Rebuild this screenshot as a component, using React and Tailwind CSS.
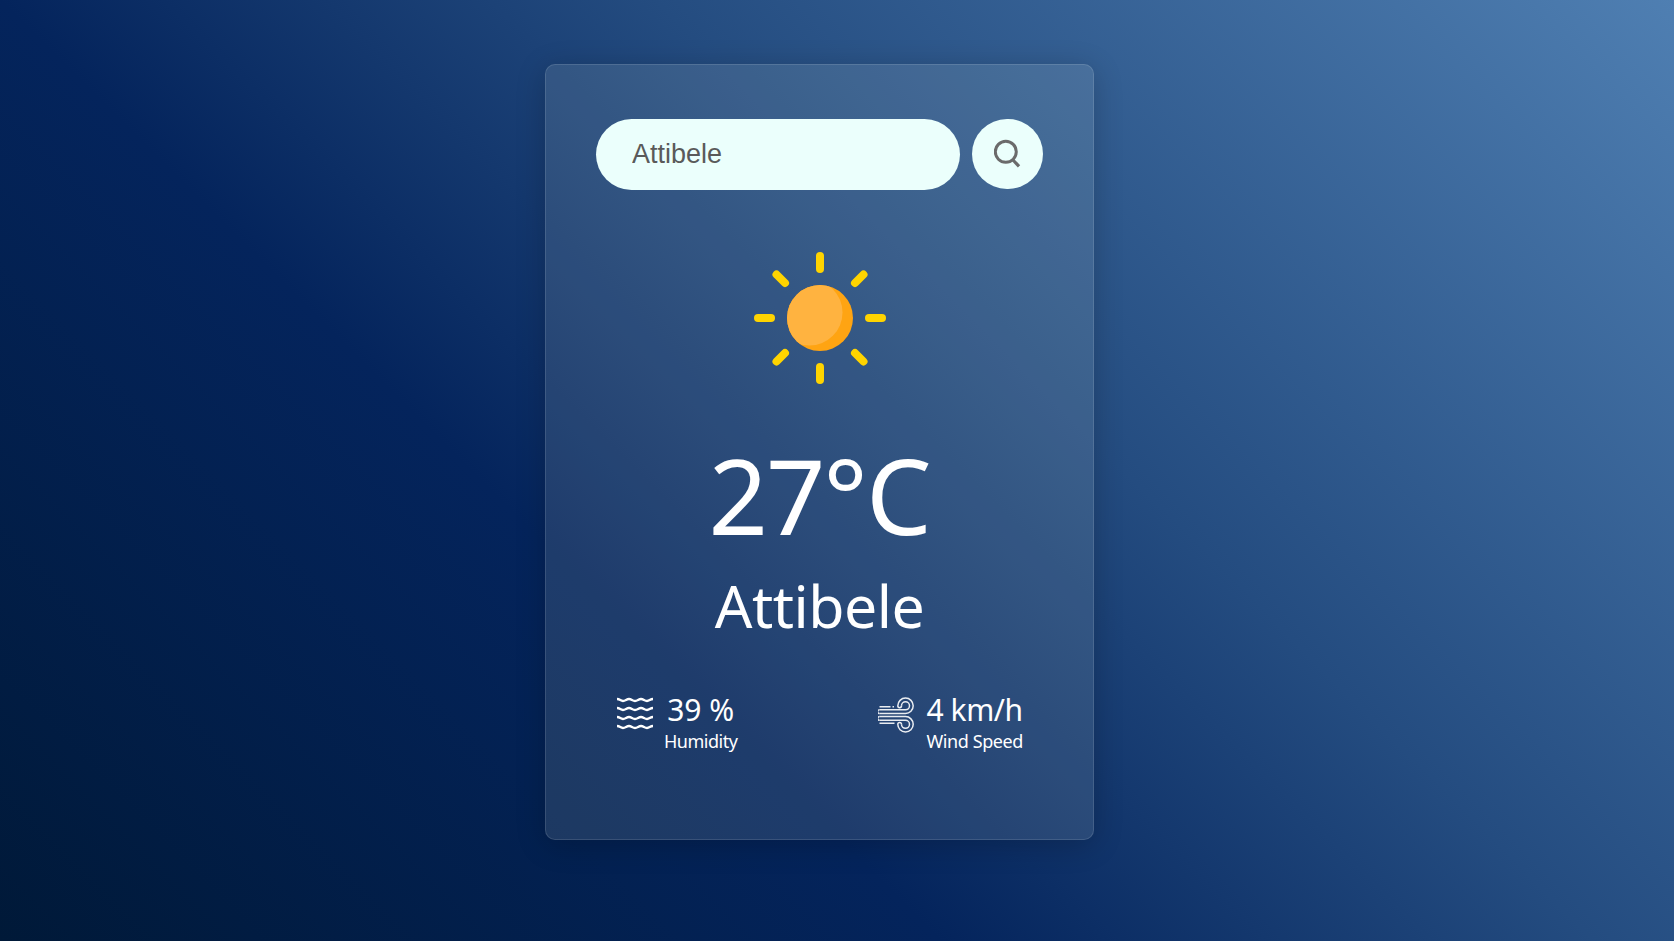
const rays = [0, 45, 90, 135, 180, 225, 270, 315];

function SunIcon() {
  return (
    <svg viewBox="0 0 132 132" className="size-[132px]">
      <defs>
        <clipPath id="disc"><circle cx="66" cy="66" r="33" /></clipPath>
      </defs>
      <circle cx="66" cy="66" r="33" fill="#ffa412" />
      <circle cx="55.500" cy="60.500" r="33" fill="#ffb340" clipPath="url(#disc)" />
      {rays.map((a) => (
        <path key={a} d={a % 90 ? "M66 4.500V16.500" : "M66 4V17"} transform={`rotate(${a} 66 66)`} stroke="#ffd400" strokeWidth="8" strokeLinecap="round" />
      ))}
    </svg>
  );
}

function SearchIcon() {
  return (
    <svg viewBox="0 0 28 30" className="h-[30px] w-7" fill="none" stroke="#6b6b6b" strokeWidth="3">
      <circle cx="11.800" cy="12.800" r="10.500" />
      <path d="M18.500 20.500L25 27.300" strokeWidth="3.200" />
    </svg>
  );
}

function HumidityIcon() {
  return (
    <svg viewBox="0 0 36 34" className="h-[34px] w-9" fill="none" stroke="#fff" strokeWidth="2.300">
      {[2.5, 11.5, 20.5, 29.5].map((y) => (
        <path key={y} d={`M0 ${y - 0.5}C3 ${y - 0.5} 3.500 ${y + 1.5} 6 ${y + 1.5}S9.500 ${y - 0.5} 12 ${y - 0.5}S15.500 ${y + 1.5} 18 ${y + 1.5}S21.500 ${y - 0.5} 24 ${y - 0.5}S27.500 ${y + 1.5} 30 ${y + 1.5}S33 ${y - 0.5} 36 ${y - 0.5}`} />
      ))}
    </svg>
  );
}

function WindIcon() {
  return (
    <svg viewBox="0 0 36 36" className="size-9" fill="none" stroke="#fff" strokeOpacity="0.9" strokeWidth="1.500">
      <path d="M1.500 12.800H27.500A4 4 0 1 0 23.500 8.800" />
      <path d="M1.500 16.500H27.500A7.700 7.700 0 1 0 19.800 8.800A1.850 1.850 0 0 0 23.500 8.800" />
      <path d="M1.500 12.800A1.850 1.850 0 0 0 1.500 16.500" />
      <path d="M1.500 23.300H27.500A4 4 0 1 1 23.500 27.300" />
      <path d="M1.500 19.600H27.500A7.700 7.700 0 1 1 19.800 27.300A1.850 1.850 0 0 1 23.500 27.300" />
      <path d="M1.500 19.600A1.850 1.850 0 0 0 1.500 23.300" />
      <path d="M1.500 9.800H12.500M14.500 9.800H16M1.500 26.300H16.500" />
    </svg>
  );
}

export default function App() {
  return (
    <main className="flex h-screen items-start justify-center overflow-hidden bg-[linear-gradient(45deg,#001938_0%,#04245c_36%,#244c80_61%,#4f7fb2_100%)] pt-16 pr-[35px] font-['Noto_Sans',sans-serif] text-white">
      <section className="flex h-[776px] w-[549px] flex-col items-center rounded-[10px] border border-white/12 bg-[#f4fff0]/11 px-[50px] pt-[54px] shadow-[0_5px_30px_rgba(0,0,0,0.2)]">
        <div className="flex w-full items-start justify-between">
          <input
            aria-label="City"
            defaultValue="Attibele"
            className="h-[71px] w-[364px] rounded-full bg-[#ebfffc] px-9 pb-px font-['Liberation_Sans',sans-serif] text-[27px] text-[#5a5a5a] outline-none"
          />
          <button aria-label="Search" className="flex h-[70px] w-[71px] items-center justify-center rounded-full bg-[#ebfffc]">
            <SearchIcon />
          </button>
        </div>
        <div className="mt-[62px] pl-px"><SunIcon /></div>
        <h1 className="mt-[48px] pr-px text-[104px] leading-[126px] font-normal tracking-[-2px]">27°C</h1>
        <h2 className="mt-[7px] text-[59px] leading-[80px] font-normal tracking-[-0.5px]">Attibele</h2>
        <div className="mt-[48px] flex w-full justify-between px-5">
          <div className="flex">
            <div className="pt-1 pl-px"><HumidityIcon /></div>
            <div className="ml-[11px] text-center">
              <p className="text-[30px] leading-[34px]">39 %</p>
              <p className="text-[18px] leading-[28px] tracking-[-0.5px]">Humidity</p>
            </div>
          </div>
          <div className="flex">
            <div className="pt-1"><WindIcon /></div>
            <div className="ml-3">
              <p className="text-[30px] leading-[34px] tracking-[-0.4px]">4 km/h</p>
              <p className="text-[18px] leading-[28px] tracking-[-0.4px]">Wind Speed</p>
            </div>
          </div>
        </div>
      </section>
    </main>
  );
}
